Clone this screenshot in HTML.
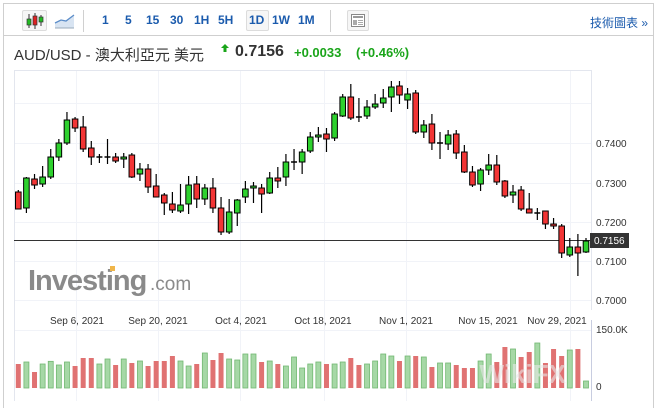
<!DOCTYPE html>
<html><head><meta charset="utf-8">
<style>
html,body{margin:0;padding:0;background:#fff;}
body{width:658px;height:409px;position:relative;overflow:hidden;font-family:"Liberation Sans","Noto Sans CJK TC",sans-serif;}
.frame{position:absolute;left:3px;top:3px;width:651px;height:405px;border:1px solid #cfcfcf;border-bottom:none;box-sizing:border-box;}
.tb{position:absolute;left:0;top:0;width:650px;height:31px;border-bottom:1px solid #cfcfcf;}
.t{position:absolute;top:9px;font-size:12px;font-weight:bold;color:#1b5bad;}
.sep{position:absolute;top:6px;width:1px;height:22px;background:#d0d0d0;}
.btn{position:absolute;top:6px;height:21px;border:1px solid #dcdcdc;border-radius:2px;background:#f6f6f6;box-sizing:border-box;}
</style></head><body>
<div class="frame">
 <div class="tb">
  <div class="btn" style="left:18px;width:25px;"></div>
  <svg style="position:absolute;left:20px;top:7px" width="22" height="20">
   <line x1="5" y1="3" x2="5" y2="17" stroke="#333"/><rect x="3" y="8" width="4" height="6" fill="#22bb22" stroke="#333" stroke-width=".7"/>
   <line x1="11" y1="2" x2="11" y2="18" stroke="#333"/><rect x="9" y="5" width="4" height="9" fill="#dd2222" stroke="#333" stroke-width=".7"/>
   <line x1="17" y1="4" x2="17" y2="15" stroke="#333"/><rect x="15" y="6" width="4" height="5" fill="#22bb22" stroke="#333" stroke-width=".7"/>
  </svg>
  <svg style="position:absolute;left:50px;top:9px" width="22" height="16">
   <path d="M1 10 L7 7 L12 8 L20 2 L20 15 L1 15Z" fill="#d8e4f2"/>
   <path d="M1 10 L7 7 L12 8 L20 2" fill="none" stroke="#5b8dc9" stroke-width="1.3"/>
   <line x1="1" y1="15" x2="20" y2="15" stroke="#9ab"/>
  </svg>
  <div class="sep" style="left:79px"></div>
  <span class="t" style="left:98px">1</span>
  <span class="t" style="left:121px">5</span>
  <span class="t" style="left:142px">15</span>
  <span class="t" style="left:166px">30</span>
  <span class="t" style="left:190px">1H</span>
  <span class="t" style="left:214px">5H</span>
  <div class="btn" style="left:242px;width:23px;"></div>
  <span class="t" style="left:245px">1D</span>
  <span class="t" style="left:268px">1W</span>
  <span class="t" style="left:294px">1M</span>
  <div class="sep" style="left:326px"></div>
  <div class="btn" style="left:343px;width:22px;"></div>
  <svg style="position:absolute;left:347px;top:10px" width="15" height="14">
   <rect x=".5" y=".5" width="13" height="12" fill="#fff" stroke="#888"/>
   <rect x="2" y="2" width="10" height="2" fill="#999"/>
   <rect x="2" y="6" width="4" height="5" fill="#aaa"/>
   <line x1="7" y1="6.5" x2="12" y2="6.5" stroke="#aaa"/><line x1="7" y1="8.5" x2="12" y2="8.5" stroke="#aaa"/><line x1="7" y1="10.5" x2="12" y2="10.5" stroke="#aaa"/>
  </svg>
  <span style="position:absolute;left:586px;top:10px;font-size:12px;color:#1b5bad;">技術圖表 »</span>
 </div>
</div>
<div style="position:absolute;left:14px;top:44px;font-size:15px;color:#333;white-space:nowrap;">AUD/USD - 澳大利亞元 美元</div>
<svg style="position:absolute;left:221px;top:44px" width="8" height="8"><path d="M4 0 L8 4 L5.5 4 L5.5 8 L2.5 8 L2.5 4 L0 4Z" fill="#1aa51a"/></svg>
<div style="position:absolute;left:235px;top:43px;font-size:16px;font-weight:bold;color:#333;">0.7156</div>
<div style="position:absolute;left:294px;top:45px;font-size:13px;font-weight:bold;color:#1aa51a;">+0.0033</div>
<div style="position:absolute;left:356px;top:45px;font-size:13px;font-weight:bold;color:#1aa51a;">(+0.46%)</div>

<svg id="ch" style="position:absolute;left:0;top:0" width="658" height="409" xmlns="http://www.w3.org/2000/svg">
 <g stroke="#f1f3f8" stroke-width="1">
  <line x1="14" y1="103.5" x2="591" y2="103.5"/><line x1="14" y1="143.5" x2="591" y2="143.5"/>
  <line x1="14" y1="183.5" x2="591" y2="183.5"/><line x1="14" y1="222.5" x2="591" y2="222.5"/>
  <line x1="14" y1="261.5" x2="591" y2="261.5"/><line x1="14" y1="300.5" x2="591" y2="300.5"/>
  <line x1="14" y1="330.5" x2="591" y2="330.5"/>
  <line x1="76.5" y1="70" x2="76.5" y2="401"/><line x1="158.5" y1="70" x2="158.5" y2="401"/>
  <line x1="240.5" y1="70" x2="240.5" y2="401"/><line x1="324.5" y1="70" x2="324.5" y2="401"/>
  <line x1="406.5" y1="70" x2="406.5" y2="401"/><line x1="570.5" y1="70" x2="570.5" y2="401"/>
 </g>
 <line x1="14.5" y1="70" x2="14.5" y2="401" stroke="#e3e6ee"/>
 <line x1="14" y1="70.5" x2="591" y2="70.5" stroke="#e3e6ee"/>
 <line x1="591.5" y1="70" x2="591.5" y2="310" stroke="#e3e6ee"/>
 <line x1="591.5" y1="320" x2="591.5" y2="401" stroke="#c8cde0"/>
 <text x="28" y="290" font-family="Liberation Sans,sans-serif" font-size="29" font-weight="bold" fill="#8a8a8a" letter-spacing="-1">Investing</text>
 <text x="150" y="290" font-family="Liberation Sans,sans-serif" font-size="19" fill="#8a8a8a">.com</text>
 <rect x="110" y="266" width="5" height="5" fill="#f0b64a"/>
 <line x1="14" y1="240.5" x2="591" y2="240.5" stroke="#333"/>
 <g id="cd"></g>
 <g id="vb"></g>
 <text x="566" y="383" font-family="Liberation Sans,sans-serif" font-size="26" font-weight="bold" fill="#e8e8e8" opacity=".6" text-anchor="end">WikiFX</text>
 <rect x="590" y="233" width="39" height="15" fill="#333"/>
 <text x="594" y="244" font-family="Liberation Sans,sans-serif" font-size="10" fill="#fff">0.7156</text>
 <g font-family="Liberation Sans,sans-serif" font-size="10" fill="#333">
  <text x="596" y="147">0.7400</text><text x="596" y="187">0.7300</text><text x="596" y="226">0.7200</text>
  <text x="596" y="265">0.7100</text><text x="596" y="304">0.7000</text>
  <text x="596" y="333">150.0K</text><text x="596" y="390">0</text>
  <text x="77" y="324" text-anchor="middle">Sep 6, 2021</text>
  <text x="158" y="324" text-anchor="middle">Sep 20, 2021</text>
  <text x="241" y="324" text-anchor="middle">Oct 4, 2021</text>
  <text x="323" y="324" text-anchor="middle">Oct 18, 2021</text>
  <text x="406" y="324" text-anchor="middle">Nov 1, 2021</text>
  <text x="488" y="324" text-anchor="middle">Nov 15, 2021</text>
  <text x="557" y="324" text-anchor="middle">Nov 29, 2021</text>
 </g>
</svg>
<script>
(function(){
var C=[[192,209,190,209],[208,178,177,213],[179,185,174,189],[184,177,166,187],[177,157,149,179],[157,143,139,161],[143,120,112,145],[119,128,117,132],[127,149,116,152],[148,157,141,165],[157,157,154,163],[157,157,139,164],[157,161,153,163],[159,157,153,168],[155,177,153,178],[174,169,163,181],[169,187,164,193],[186,197,174,197],[195,203,193,215],[204,210,192,213],[211,205,184,213],[204,185,176,214],[184,199,176,208],[199,188,184,205],[188,208,178,213],[208,232,197,235],[232,212,199,234],[213,200,199,226],[197,189,181,203],[188,186,182,203],[188,194,184,213],[193,178,172,194],[178,181,167,188],[177,162,154,186],[162,162,149,170],[162,152,149,174],[151,137,132,153],[137,135,127,142],[134,139,128,152],[138,114,112,141],[116,97,94,117],[97,118,84,120],[117,118,98,122],[116,107,100,119],[107,104,94,109],[103,98,89,108],[97,87,81,112],[86,95,81,104],[100,94,88,109],[93,132,90,134],[132,125,120,138],[124,143,114,150],[143,143,132,159],[144,135,130,150],[134,153,130,159],[152,172,145,173],[172,185,166,187],[184,170,168,191],[170,165,154,175],[165,182,155,185],[181,196,180,198],[195,192,185,203],[190,209,186,211],[209,213,193,213],[213,213,208,220],[211,224,211,229],[224,226,218,229],[226,253,224,258],[255,247,238,257],[247,253,234,276],[252,241,238,253]];
var V=[192,186,216,192,184,195,186,198,174,174,192,177,195,177,189,183,198,183,183,168,183,198,192,159,180,159,177,180,162,162,186,183,192,198,171,204,192,186,192,192,186,174,195,192,183,162,168,183,168,168,171,201,189,189,195,204,204,183,162,186,141,147,171,156,129,189,147,168,150,147,243];
var s='',v='';
for(var i=0;i<C.length;i++){var c=C[i],cx=18.3+8.11*i,up=c[1]<=c[0],by=Math.min(c[0],c[1]),bh=Math.abs(c[0]-c[1]);
 s+='<line x1="'+cx+'" y1="'+c[2]+'" x2="'+cx+'" y2="'+c[3]+'" stroke="#000" stroke-width="1.2"/>';
 if(bh<1.5)s+='<line x1="'+(cx-3)+'" y1="'+by+'" x2="'+(cx+3)+'" y2="'+by+'" stroke="#000" stroke-width="1.5"/>';
 else s+='<rect x="'+(cx-2.8)+'" y="'+by+'" width="5.6" height="'+bh+'" fill="'+(up?'#2ed12e':'#f23535')+'" stroke="#000" stroke-width="1"/>';
 var vt=300+V[i]/3,vh=388-vt;
 v+='<rect x="'+(cx-2.5)+'" y="'+vt+'" width="5" height="'+vh+'" fill="'+(up?'#a6d8a6':'#e07272')+'" stroke="'+(up?'#72b872':'none')+'" stroke-width="0.8"/>';}
document.getElementById('cd').innerHTML=s;document.getElementById('vb').innerHTML=v;
})();
</script>
</body></html>
